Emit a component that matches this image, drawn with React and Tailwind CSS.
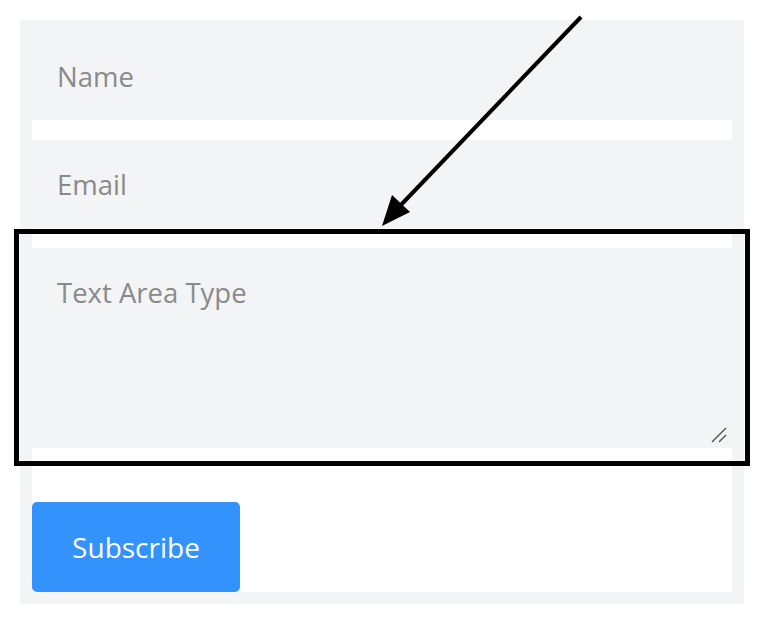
import React from "react";

export default function App() {
  return (
    <div className="relative w-[764px] h-[624px] bg-white" style={{ fontFamily: '"Open Sans", sans-serif' }}>
      <div className="absolute left-0 top-0 w-full h-full p-[20px]">
        <div className="w-[724px] h-[584px] bg-[#f3f4f6] p-[12px]">
          <div className="w-full h-full bg-white flex flex-col">
            <input
              placeholder="Name"
              className="h-[88px] w-full bg-[#f3f4f6] px-[25px] text-[27.5px] text-[#555] placeholder:text-[#8a8a8a] outline-none"
            />
            <input
              placeholder="Email"
              className="mt-[20px] h-[88px] w-full bg-[#f3f4f6] px-[25px] text-[27.5px] text-[#555] placeholder:text-[#8a8a8a] outline-none"
            />
            <div className="relative mt-[20px] h-[200px] w-full">
              <textarea
                placeholder="Text Area Type"
                className="block h-full w-full resize-none bg-[#f3f4f6] px-[25px] pt-[26px] text-[27.5px] leading-[38px] text-[#555] placeholder:text-[#8a8a8a] outline-none"
              />
              <svg className="absolute left-[678px] top-[178px] pointer-events-none" width="18" height="18" viewBox="0 0 18 18">
                <line x1="16" y1="2" x2="2" y2="16" stroke="#555" strokeWidth="1.5" />
                <line x1="16" y1="9" x2="9" y2="16" stroke="#555" strokeWidth="1.5" />
              </svg>
            </div>
            <button className="mt-[54px] h-[90px] w-[208px] rounded-[5px] bg-[#3392fb] text-white text-[28px]">
              Subscribe
            </button>
          </div>
        </div>
      </div>
      <div className="absolute left-[14px] top-[229px] w-[736px] h-[237px] border-[5px] border-black pointer-events-none" />
      <svg className="absolute left-0 top-0 pointer-events-none" width="764" height="624">
        <line x1="581" y1="17" x2="398" y2="208" stroke="black" strokeWidth="4" />
        <polygon points="382,226 392,195 410,212" fill="black" />
      </svg>
    </div>
  );
}
